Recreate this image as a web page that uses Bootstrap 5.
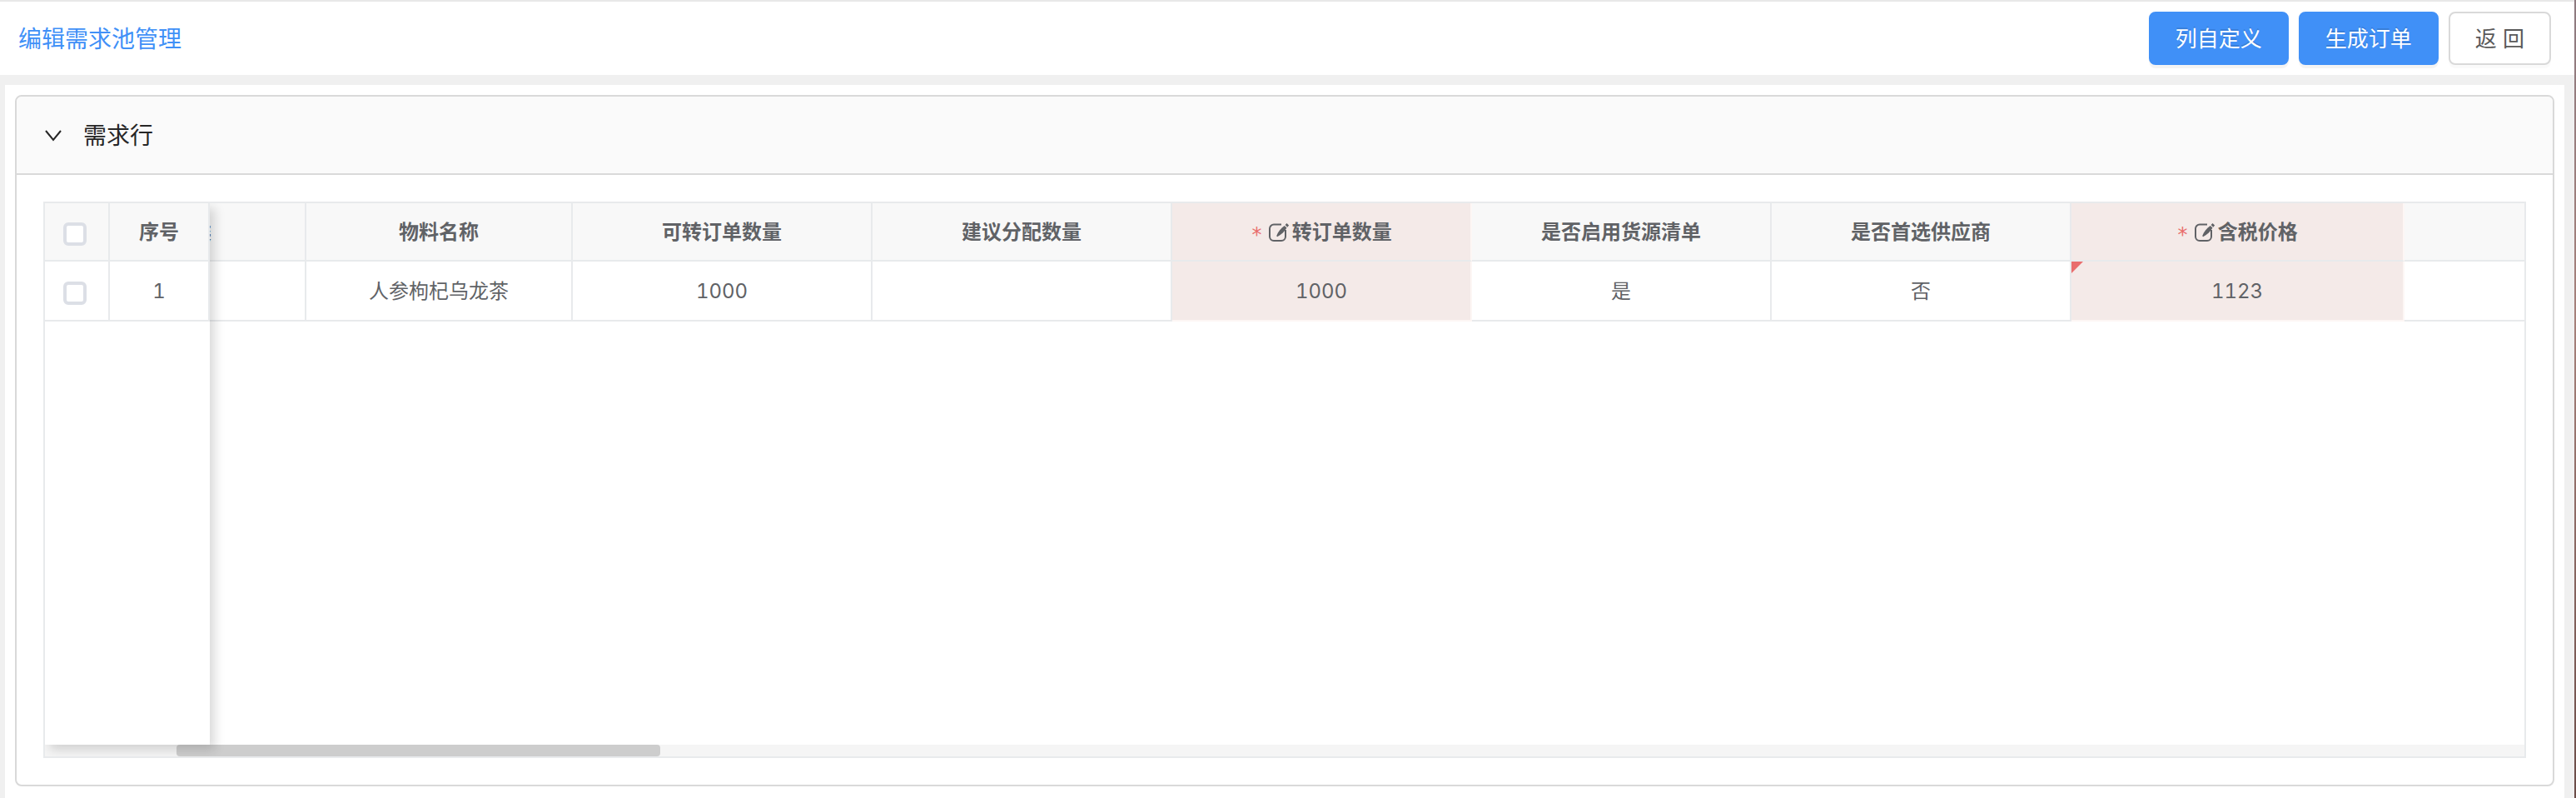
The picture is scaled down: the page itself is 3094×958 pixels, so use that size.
<!DOCTYPE html>
<html lang="zh-CN">
<head>
<meta charset="utf-8">
<meta name="viewport" content="width=device-width, initial-scale=1">
<title>编辑需求池管理</title>
<link href="https://cdn.jsdelivr.net/npm/bootstrap@5.3.0/dist/css/bootstrap.min.css" rel="stylesheet">
<style>
:root { --line: #e8eaec; --frame: #d9d9d9; --brand: #4090f7; --ink: #606266; --tint: #f4eae8; }
html { height: 100%; }
body { min-height: 100%; padding-right: 2px; background: linear-gradient(#8d7a80, #a5807a 40%, #6b4c48) right / 2px 100% no-repeat, #f0f0f0; font-family: Inter, "Noto Sans CJK SC", sans-serif; font-size: 24px; line-height: 36px; color: var(--ink); font-variant-numeric: tabular-nums; }
.topbar { background: #fff; border-top: 2px solid #e8e8e8; padding: 12px 28px 12px 22px; }
.page-title { font-size: 28px; line-height: 40px; color: var(--brand); padding-top: 2px; }
.btn-tool { height: 64px; padding: 2px 30px 0; border: 2px solid var(--frame); border-radius: 8px; font-size: 26px; line-height: 36px; color: #595959; background: #fff; box-shadow: 0 4px 0 rgba(0,0,0,.02); }
.btn-tool.main { border-color: var(--brand); background: var(--brand); color: #fff; text-shadow: 0 -2px 0 rgba(0,0,0,.12); box-shadow: 0 4px 0 rgba(0,0,0,.045); }
.tools { gap: 12px; }
.workspace { margin: 12px 12px 0 6px; padding: 12px 12px 14px; background: #fff; }
.demand { border: 2px solid var(--frame); border-radius: 8px; --bs-card-inner-border-radius: 6px; }
.demand .card-header { height: 94px; padding: 0 32px; border-bottom: 2px solid var(--frame); background: #fafafa; gap: 26px; }
.demand h2 { font-size: 28px; line-height: 40px; color: #262626; font-weight: 400; padding-top: 2px; }
.demand .card-body { padding: 32px; }
.toggle { width: 22px; height: 40px; color: #262626; }
.grid-box { border: 2px solid var(--line); overflow: hidden; }
.grid-view { height: 650px; }
.pinned { width: 198px; background: #fff; z-index: 2; box-shadow: 6px 6px 12px rgba(0,0,0,.15); }
.scrolled { margin-left: -22px; }
.sheet { table-layout: fixed; width: 100%; border-collapse: separate; border-spacing: 0; text-align: center; }
.sheet th, .sheet td { padding: 2px 0 0; border-right: 2px solid var(--line); border-bottom: 2px solid var(--line); white-space: nowrap; overflow: hidden; position: relative; }
.sheet th { height: 70px; background: #f8f8f8; font-weight: 700; }
.sheet td { height: 72px; background: #fff; }
.sheet th.editable, .sheet td.editable { background: var(--tint); border-right-color: #fdf6f4; }
.sheet td.editable { border-bottom-color: #fdf6f4; }
.scrolled tr > :last-child { border-right: 0; }
.changed::before { content: ""; position: absolute; left: 0; top: 0; border: 7px solid transparent; border-top-color: #e96d6d; border-left-color: #e96d6d; }
.tick { width: 28px; height: 28px; margin: 2px 4px 0 0; border: 4px solid #dcdfe6; border-radius: 4px; vertical-align: middle; background: #fff; }
.req { color: #e96d6d; font-weight: 400; font-family: "DejaVu Sans Mono", monospace; padding-top: 6px; }
.edit-icon { width: 26px; height: 24px; margin: 0 3px 0 6px; }
.track { height: 14px; background: #f5f5f5; padding-left: 158px; }
.thumb { height: 14px; border-radius: 4px; background: #cdcdcd; }
</style>
</head>
<body>
<svg class="d-none" aria-hidden="true">
  <symbol id="edit" viewBox="0 0 26 24">
    <path d="M16 2.5H7a5 5 0 0 0-5 5V17a5 5 0 0 0 5 5h9a5 5 0 0 0 5-5V9" fill="none" stroke="currentColor" stroke-width="2"/>
    <path d="M22.5 1l2.6 2.5-1.8 2.2-2.7-2.6zM19.8 3.9l2.7 2.6c-2.4 4-6.200 8.300-11.400 10.700l-.9-.9c1.600-4.900 5.200-9.200 9.600-12.400z" fill="currentColor"/>
  </symbol>
</svg>
<header class="topbar d-flex align-items-center justify-content-between">
  <h1 class="page-title fw-normal mb-0">编辑需求池管理</h1>
  <div class="tools d-flex">
    <button type="button" class="btn btn-tool main">列自定义</button>
    <button type="button" class="btn btn-tool main">生成订单</button>
    <button type="button" class="btn btn-tool">返 回</button>
  </div>
</header>
<main class="workspace">
  <section class="card demand">
    <div class="card-header d-flex align-items-center">
      <button type="button" class="toggle btn p-0 border-0 d-flex align-items-center" aria-label="收起">
        <svg width="22" height="16" viewBox="0 0 22 16" fill="none" stroke="currentColor" stroke-width="2"><path d="M3 3l9 11 9-11"/></svg>
      </button>
      <h2 class="mb-0">需求行</h2>
    </div>
    <div class="card-body">
      <div class="grid-box">
        <div class="grid-view d-flex">
          <div class="pinned position-relative flex-shrink-0">
            <table class="sheet">
              <colgroup><col style="width:78px"><col></colgroup>
              <thead><tr><th><input type="checkbox" class="tick form-check-input" aria-label="全选"></th><th>序号</th></tr></thead>
              <tbody><tr><td><input type="checkbox" class="tick form-check-input" aria-label="选择第 1 行"></td><td>1</td></tr></tbody>
            </table>
          </div>
          <div class="scrolled flex-grow-1">
            <table class="sheet">
              <colgroup><col style="width:138px"><col style="width:320px"><col style="width:360px"><col style="width:360px"><col style="width:360px"><col style="width:360px"><col style="width:360px"><col style="width:400px"><col></colgroup>
              <thead><tr>
                <th class="text-start">类</th><th>物料名称</th><th>可转订单数量</th><th>建议分配数量</th>
                <th class="editable"><div class="d-flex align-items-center justify-content-center"><span class="req">*</span><svg class="edit-icon"><use href="#edit"/></svg>转订单数量</div></th>
                <th>是否启用货源清单</th><th>是否首选供应商</th>
                <th class="editable"><div class="d-flex align-items-center justify-content-center"><span class="req">*</span><svg class="edit-icon"><use href="#edit"/></svg>含税价格</div></th>
                <th></th>
              </tr></thead>
              <tbody><tr>
                <td></td><td>人参枸杞乌龙茶</td><td>1000</td><td></td><td class="editable">1000</td><td>是</td><td>否</td><td class="editable changed">1123</td><td></td>
              </tr></tbody>
            </table>
          </div>
        </div>
        <div class="track"><div class="thumb" style="width:20.6%"></div></div>
      </div>
    </div>
  </section>
</main>
<script src="https://cdn.jsdelivr.net/npm/bootstrap@5.3.0/dist/js/bootstrap.bundle.min.js"></script>
</body>
</html>
